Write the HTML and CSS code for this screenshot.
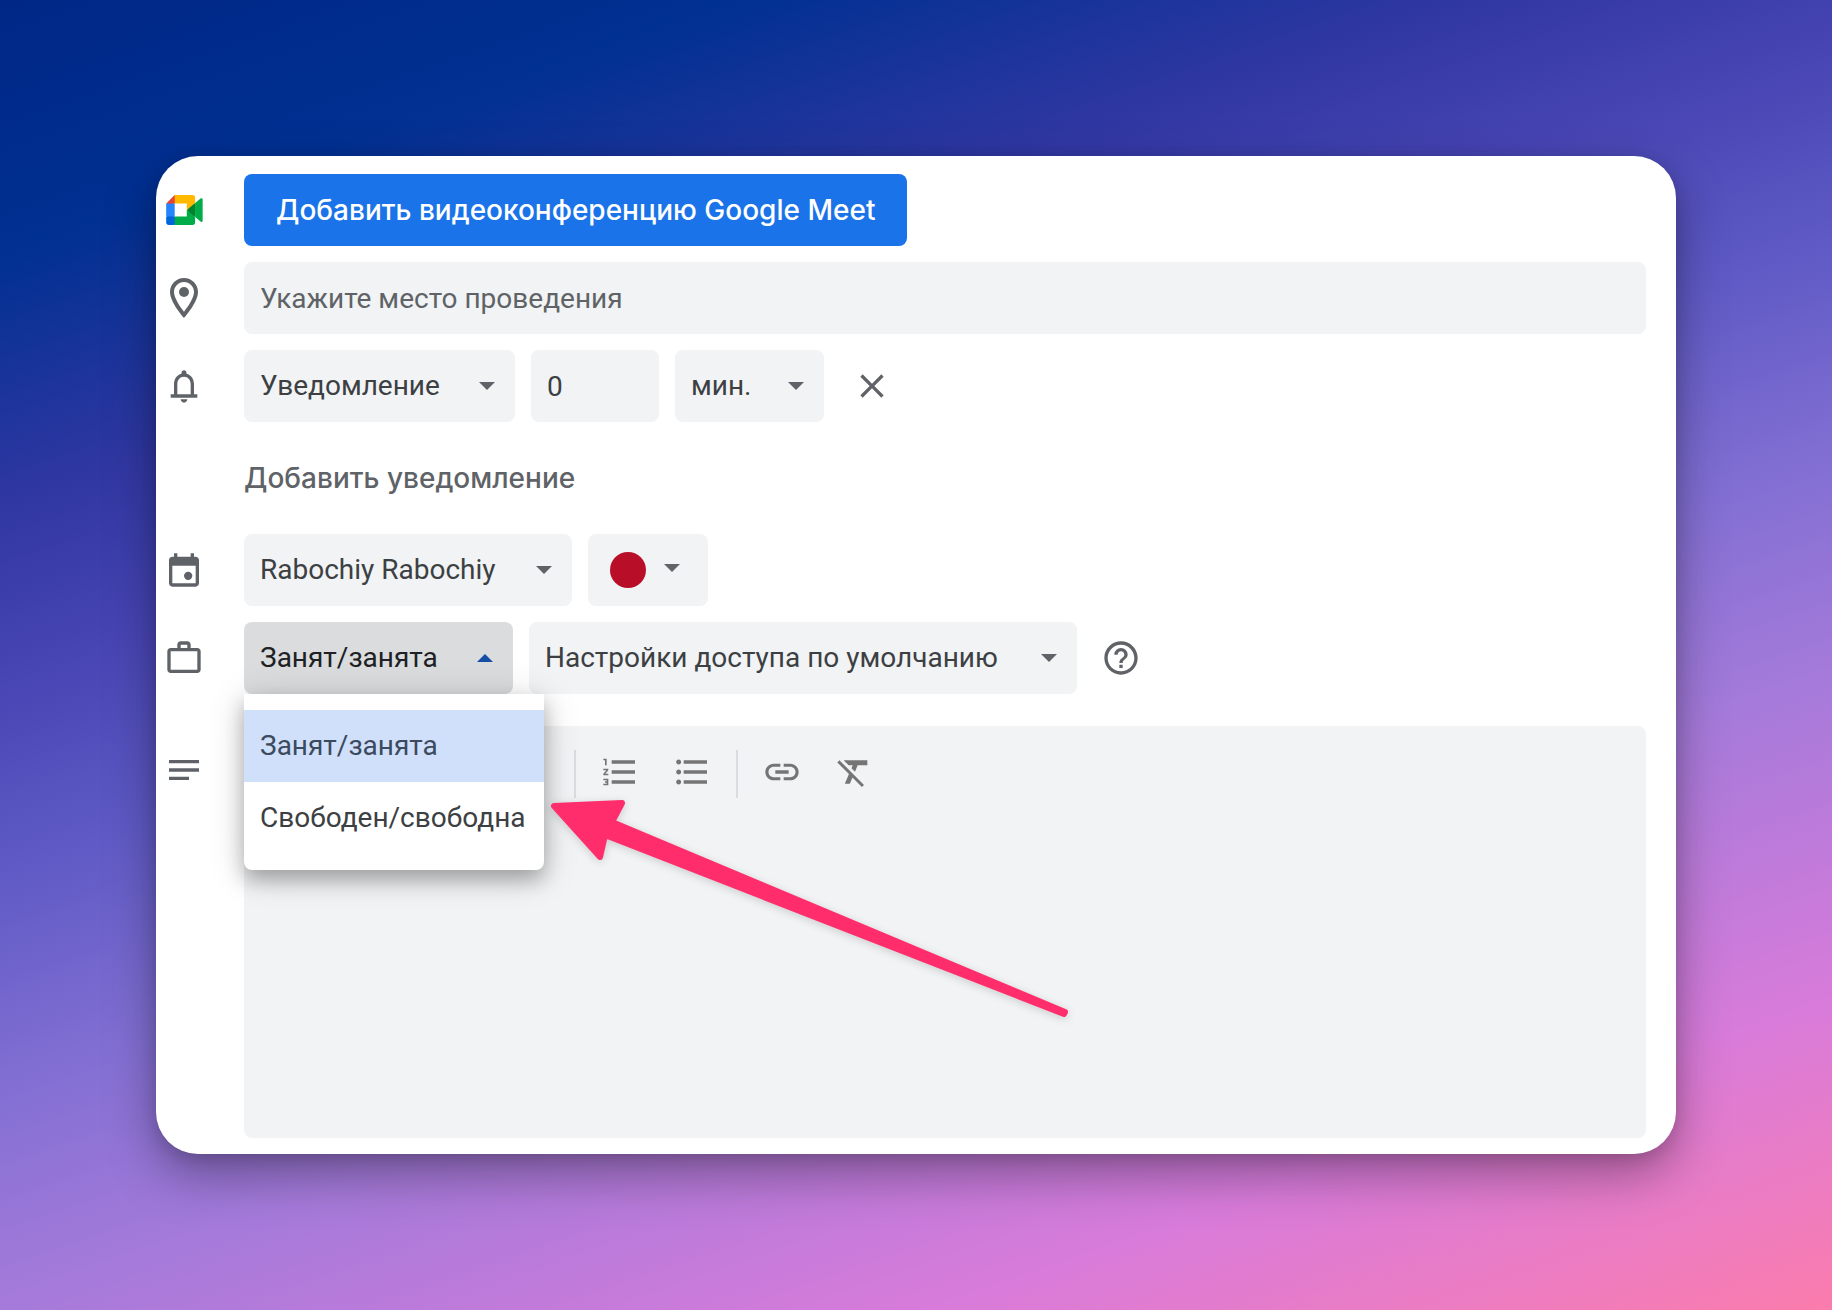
FILE: index.html
```html
<!DOCTYPE html>
<html lang="ru">
<head>
<meta charset="utf-8">
<meta name="viewport" content="width=device-width, initial-scale=1">
<title>Мероприятие</title>
<link rel="stylesheet" href="styles.css">
</head>
<body>
<main class="card">
  <form class="form">
    <div class="row">
      <svg class="icon meet" viewBox="0 0 88 72" aria-hidden="true">
        <path fill="#00832d" d="M49.5 36l8.530 9.750 11.470 7.330 2-17.020-2-16.640-11.690 6.440z"/>
        <path fill="#0066da" d="M0 51.500V66c0 3.315 2.685 6 6 6h14.500l3-10.960-3-9.540-9.950-3z"/>
        <path fill="#e94235" d="M20.500 0L0 20.500l10.550 3 9.950-3 2.950-9.410z"/>
        <path fill="#2684fc" d="M20.500 20.500H0v31h20.500z"/>
        <path fill="#00ac47" d="M82.600 8.680L69.500 19.420v33.660l13.160 10.790c1.970 1.540 4.850.135 4.850-2.370V11c0-2.535-2.945-3.925-4.910-2.320zM49.500 36v15.500h-29V72h43c3.315 0 6-2.685 6-6V53.080z"/>
        <path fill="#ffba00" d="M63.500 0h-43v20.500h29V36l20-16.570V6c0-3.315-2.685-6-6-6z"/>
      </svg>
      <div class="fields">
        <button type="button" class="primary">Добавить видеоконференцию Google Meet</button>
      </div>
    </div>

    <div class="row">
      <svg class="icon large" viewBox="0 0 24 24" aria-hidden="true">
        <path d="M12 2C8.130 2 5 5.130 5 9c0 5.250 7 13 7 13s7-7.750 7-13c0-3.870-3.130-7-7-7zM7 9c0-2.760 2.240-5 5-5s5 2.240 5 5c0 2.880-2.880 7.190-5 9.880C9.920 16.210 7 11.850 7 9z"/>
        <circle cx="12" cy="9" r="2.500"/>
      </svg>
      <div class="fields">
        <input class="field grow" type="text" placeholder="Укажите место проведения" aria-label="Место проведения">
      </div>
    </div>

    <div class="row">
      <svg class="icon" viewBox="0 0 24 24" aria-hidden="true">
        <path d="M18 17v-6c0-3.070-1.630-5.640-4.500-6.320V4c0-.830-.670-1.500-1.500-1.500s-1.500.670-1.500 1.500v.680C7.640 5.360 6 7.920 6 11v6H4v2h16v-2h-2zm-2 0H8v-6c0-2.480 1.510-4.500 4-4.500s4 2.020 4 4.500v6zm-4 5c1.100 0 2-.900 2-2h-4c0 1.100.890 2 2 2z"/>
      </svg>
      <div class="fields">
        <span class="pick pick-kind">
          <select class="field" aria-label="Тип уведомления"><option>Уведомление</option><option>Эл. письмо</option></select>
          <svg class="caret" viewBox="0 0 16 8" aria-hidden="true"><path d="M0 0h16L8 8z"/></svg>
        </span>
        <input class="field amount" type="text" inputmode="numeric" value="0" aria-label="Количество">
        <span class="pick pick-unit">
          <select class="field" aria-label="Единица времени"><option>мин.</option><option>ч.</option></select>
          <svg class="caret" viewBox="0 0 16 8" aria-hidden="true"><path d="M0 0h16L8 8z"/></svg>
        </span>
        <button type="button" class="plain remove" aria-label="Удалить уведомление">
          <svg class="icon" viewBox="0 0 24 24" aria-hidden="true"><path d="M19 6.410L17.590 5 12 10.590 6.410 5 5 6.410 10.590 12 5 17.590 6.410 19 12 13.410 17.590 19 19 17.590 13.410 12z"/></svg>
        </button>
      </div>
    </div>

    <div class="row row-text">
      <button type="button" class="plain add">Добавить уведомление</button>
    </div>

    <div class="row">
      <svg class="icon" viewBox="0 0 24 24" aria-hidden="true">
        <path d="M19 4h-1V2h-2v2H8V2H6v2H5c-1.110 0-2 .900-2 2v14c0 1.100.890 2 2 2h14c1.100 0 2-.900 2-2V6c0-1.100-.900-2-2-2zm0 16H5V9.500h14V20z"/>
        <circle cx="14.500" cy="15.500" r="2.500"/>
      </svg>
      <div class="fields">
        <span class="pick pick-calendar">
          <select class="field" aria-label="Календарь"><option>Rabochiy Rabochiy</option></select>
          <svg class="caret" viewBox="0 0 16 8" aria-hidden="true"><path d="M0 0h16L8 8z"/></svg>
        </span>
        <button type="button" class="field color" aria-label="Цвет мероприятия">
          <span class="dot"></span>
          <svg class="triangle" viewBox="0 0 16 8" aria-hidden="true"><path d="M0 0h16L8 8z"/></svg>
        </button>
      </div>
    </div>

    <div class="row">
      <svg class="icon" viewBox="0 0 24 24" aria-hidden="true">
        <path d="M20 6h-4V4c0-1.110-.890-2-2-2h-4c-1.110 0-2 .890-2 2v2H4c-1.110 0-2 .890-2 2v11c0 1.110.890 2 2 2h16c1.110 0 2-.890 2-2V8c0-1.110-.890-2-2-2zM10 4h4v2h-4V4zm10 15H4V8h16v11z"/>
      </svg>
      <div class="fields">
        <span class="pick pick-status">
          <select class="field open" aria-label="Занятость"><option>Занят/занята</option><option>Свободен/свободна</option></select>
          <svg class="caret caret-open" viewBox="0 0 16 8" aria-hidden="true"><path d="M0 8h16L8 0z"/></svg>
          <ul class="menu" role="listbox" aria-label="Занятость">
            <li class="option selected" role="option" aria-selected="true">Занят/занята</li>
            <li class="option" role="option" aria-selected="false">Свободен/свободна</li>
          </ul>
        </span>
        <span class="pick pick-access">
          <select class="field" aria-label="Доступ"><option>Настройки доступа по умолчанию</option></select>
          <svg class="caret" viewBox="0 0 16 8" aria-hidden="true"><path d="M0 0h16L8 8z"/></svg>
        </span>
        <button type="button" class="plain help" aria-label="Справка">
          <svg class="icon" viewBox="0 0 24 24" aria-hidden="true"><path d="M11 18h2v-2h-2v2zm1-16C6.480 2 2 6.480 2 12s4.480 10 10 10 10-4.480 10-10S17.520 2 12 2zm0 18c-4.410 0-8-3.590-8-8s3.590-8 8-8 8 3.590 8 8-3.590 8-8 8zm0-14c-2.210 0-4 1.790-4 4h2c0-1.100.900-2 2-2s2 .900 2 2c0 2-3 1.750-3 5h2c0-2.250 3-2.500 3-5 0-2.210-1.790-4-4-4z"/></svg>
        </button>
      </div>
    </div>

    <div class="row row-description">
      <svg class="icon" viewBox="0 0 24 24" aria-hidden="true">
        <path d="M3 6h18v2H3zM3 11h18v2H3zM3 16h12v2H3z"/>
      </svg>
      <div class="editor">
        <div class="toolbar" role="toolbar" aria-label="Форматирование">
          <button type="button" class="tool" aria-label="Прикрепить файл"><svg class="icon" viewBox="0 0 24 24"><path d="M16.500 6v11.500c0 2.210-1.790 4-4 4s-4-1.790-4-4V5c0-1.380 1.120-2.500 2.500-2.500s2.500 1.120 2.500 2.500v10.500c0 .550-.450 1-1 1s-1-.450-1-1V6H10v9.500c0 1.380 1.120 2.500 2.500 2.500s2.500-1.120 2.500-2.500V5c0-2.210-1.790-4-4-4S7 2.790 7 5v12.500c0 3.040 2.460 5.500 5.500 5.500s5.500-2.460 5.500-5.500V6h-1.500z"/></svg></button>
          <button type="button" class="tool" aria-label="Полужирный"><svg class="icon" viewBox="0 0 24 24"><path d="M15.600 10.790c.970-.670 1.650-1.770 1.650-2.790 0-2.260-1.750-4-4-4H7v14h7.040c2.090 0 3.710-1.700 3.710-3.790 0-1.520-.860-2.820-2.150-3.420zM10 6.500h3c.830 0 1.500.670 1.500 1.500s-.670 1.500-1.500 1.500h-3v-3zm3.500 9H10v-3h3.500c.830 0 1.500.670 1.500 1.500s-.670 1.500-1.500 1.500z"/></svg></button>
          <button type="button" class="tool" aria-label="Курсив"><svg class="icon" viewBox="0 0 24 24"><path d="M10 4v3h2.210l-3.420 8H6v3h8v-3h-2.210l3.420-8H18V4z"/></svg></button>
          <button type="button" class="tool" aria-label="Подчеркнутый"><svg class="icon" viewBox="0 0 24 24"><path d="M12 17c3.310 0 6-2.690 6-6V3h-2.500v8c0 1.930-1.570 3.500-3.500 3.500S8.500 12.930 8.500 11V3H6v8c0 3.310 2.690 6 6 6zm-7 2v2h14v-2H5z"/></svg></button>
          <span class="divider"></span>
          <button type="button" class="tool" aria-label="Нумерованный список"><svg class="icon" viewBox="0 0 24 24"><path d="M2 17h2v.500H3v1h1v.500H2v1h3v-4H2v1zm1-9h1V4H2v1h1v3zm-1 3h1.800L2 13.100v.900h3v-1H3.200L5 10.900V10H2v1zm5-6v2h14V5H7zm0 14h14v-2H7v2zm0-6h14v-2H7v2z"/></svg></button>
          <button type="button" class="tool" aria-label="Маркированный список"><svg class="icon" viewBox="0 0 24 24"><path d="M4 10.500c-.830 0-1.500.670-1.500 1.500s.670 1.500 1.500 1.500 1.500-.670 1.500-1.500-.670-1.500-1.500-1.500zm0-6c-.830 0-1.500.670-1.500 1.500S3.170 7.500 4 7.500 5.500 6.830 5.500 6 4.830 4.500 4 4.500zm0 12c-.830 0-1.500.680-1.500 1.500s.680 1.500 1.500 1.500 1.500-.680 1.500-1.500-.670-1.500-1.500-1.500zM7 19h14v-2H7v2zm0-6h14v-2H7v2zm0-8v2h14V5H7z"/></svg></button>
          <span class="divider"></span>
          <button type="button" class="tool" aria-label="Вставить ссылку"><svg class="icon" viewBox="0 0 24 24"><path d="M3.900 12c0-1.710 1.390-3.100 3.100-3.100h4V7H7c-2.760 0-5 2.240-5 5s2.240 5 5 5h4v-1.900H7c-1.710 0-3.100-1.390-3.100-3.100zM8 13h8v-2H8v2zm9-6h-4v1.900h4c1.710 0 3.100 1.390 3.100 3.100s-1.390 3.100-3.100 3.100h-4V17h4c2.760 0 5-2.240 5-5s-2.240-5-5-5z"/></svg></button>
          <button type="button" class="tool" aria-label="Удалить форматирование"><svg class="icon" viewBox="0 0 24 24"><path d="M3.270 5L2 6.270l6.970 6.970L6.500 19h3l1.570-3.660L16.730 21 18 19.730 3.550 5.270 3.270 5zM6 5v.180L8.820 8h2.400l-.720 1.680 2.100 2.100L14.210 8H20V5H6z"/></svg></button>
        </div>
        <textarea class="description" aria-label="Описание"></textarea>
        <svg class="pointer" viewBox="0 0 530 230" aria-hidden="true">
          <path d="M12 14L80 11 70 30 523 220 522 222 63 43 58 65z"/>
        </svg>
      </div>
    </div>
  </form>
</main>
</body>
</html>
```
FILE: styles.css
```css
*,
*::before,
*::after {
  box-sizing: border-box;
}

body {
  margin: 0;
  min-height: 100vh;
  padding: 156px;
  display: flex;
  flex-direction: column;
  font-family: Roboto, "Liberation Sans", sans-serif;
  font-size: 28px;
  line-height: 36px;
  color: #3c4043;
  background: linear-gradient(161deg, #002786 0%, #003092 13%, #3037a2 26%, #4543b2 34%, #5f5ac5 45%, #826fd3 56%, #a47ada 67%, #d87bda 84%, #ec7cc2 93%, #fb7cac 100%);
}

button,
input,
select,
textarea {
  font: inherit;
  color: inherit;
  margin: 0;
  border: 0;
}

.card {
  flex: 1;
  display: flex;
  padding: 18px 30px 16px 0;
  background: #fff;
  border-radius: 42px;
  box-shadow: 0 20px 50px rgba(0, 0, 0, 0.35), 0 4px 16px rgba(0, 0, 0, 0.12);
}

.form {
  flex: 1;
  display: flex;
  flex-direction: column;
  gap: 16px;
}

/* Each row: icon gutter on the left, fields on the right */
.row {
  display: grid;
  grid-template-columns: 56px minmax(0, 1fr);
  column-gap: 32px;
  align-items: center;
  min-height: 72px;
}

.icon {
  display: block;
  width: 40px;
  height: 40px;
  fill: #5f6368;
  justify-self: center;
}

.icon.large {
  width: 48px;
  height: 48px;
}

.icon.meet {
  width: 37px;
  height: 30px;
}

.fields {
  display: flex;
  align-items: center;
  gap: 16px;
}

.primary,
.add {
  font-family: Inter, Roboto, sans-serif;
  font-weight: 500;
}

.primary {
  height: 72px;
  padding: 0 32px;
  border-radius: 8px;
  background: #1a73e8;
  color: #fff;
}

.field {
  height: 72px;
  padding: 0 16px;
  border-radius: 8px;
  background: #f1f3f4;
}

.field::placeholder {
  color: #5f6368;
  opacity: 1;
}

.grow {
  flex: 1;
  min-width: 0;
}

.amount {
  width: 128px;
}

.pick {
  position: relative;
  display: flex;
}

.pick select {
  appearance: none;
  width: 100%;
}

.pick-kind {
  width: 271px;
}

.pick-unit {
  width: 149px;
}

.pick-calendar {
  width: 328px;
}

.pick-status {
  width: 269px;
}

.pick-access {
  width: 548px;
}

.caret {
  position: absolute;
  right: 20px;
  top: 32px;
  width: 16px;
  height: 8px;
  fill: #5f6368;
  pointer-events: none;
}

.caret-open {
  fill: #174ea6;
}

.pick .open {
  background: #dadcde;
  color: #202124;
}

.plain {
  padding: 0;
  background: none;
}

.remove {
  margin-left: 12px;
}

.help {
  margin-left: 8px;
}

.row-text {
  min-height: 80px;
}

.add {
  grid-column: 2;
  justify-self: start;
  color: #5f6368;
}

.color {
  width: 120px;
  padding: 0 22px;
  display: flex;
  align-items: center;
  gap: 18px;
}

.dot {
  width: 36px;
  height: 36px;
  border-radius: 50%;
  background: #b80e28;
}

.triangle {
  width: 16px;
  height: 8px;
  margin-bottom: 4px;
  fill: #5f6368;
}

.menu {
  position: absolute;
  top: 100%;
  left: 0;
  z-index: 2;
  width: 300px;
  margin: 0;
  padding: 16px 0;
  list-style: none;
  background: #fff;
  border-radius: 0 0 8px 8px;
  box-shadow: 0 10px 20px rgba(0, 0, 0, 0.28), 0 4px 40px rgba(0, 0, 0, 0.14);
}

.option {
  padding: 18px 16px;
  white-space: nowrap;
}

.option.selected {
  background: #d0e0fb;
  color: #3c4a5e;
}

.row-description {
  flex: 1;
  align-items: stretch;
  margin-top: 16px;
}

.row-description > .icon {
  margin-top: 24px;
}

.editor {
  position: relative;
  display: flex;
  flex-direction: column;
  min-height: 412px;
  background: #f1f3f4;
  border-radius: 8px;
}

.toolbar {
  display: flex;
  align-items: flex-start;
  padding: 24px 34px 0;
}

.tool {
  width: 72px;
  height: 44px;
  padding: 0 16px;
  background: none;
}

.tool .icon {
  fill: #757575;
}

.divider {
  width: 2px;
  height: 48px;
  margin: 0 8px;
  background: #dadce0;
}

.description {
  flex: 1;
  padding: 16px;
  resize: none;
  background: none;
}

/* Annotation arrow pointing at the open menu */
.pointer {
  position: absolute;
  left: 298px;
  top: 66px;
  z-index: 3;
  width: 530px;
  height: 230px;
  overflow: visible;
  pointer-events: none;
  fill: #ff2d6b;
  stroke: #ff2d6b;
  stroke-width: 6px;
  stroke-linejoin: round;
  filter: drop-shadow(0 2px 4px rgba(0, 0, 0, 0.16));
}
```
